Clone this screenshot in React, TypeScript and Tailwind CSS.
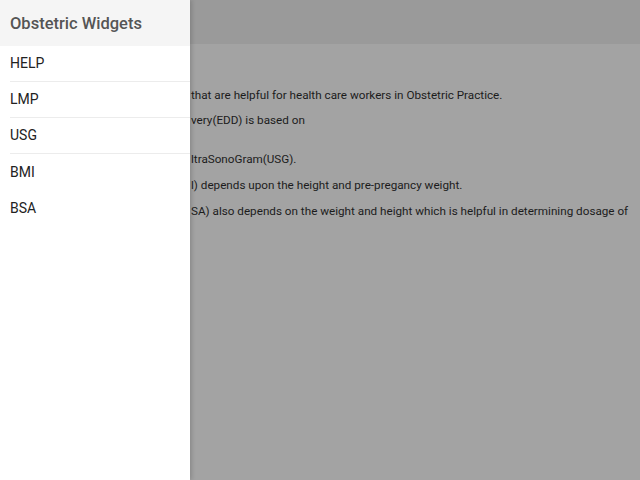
const items = ["HELP", "LMP", "USG", "BMI", "BSA"];

function Drawer() {
  return (
    <div className="z-10 h-full w-[190px] shrink-0 bg-white shadow-[2px_0_4px_rgba(0,0,0,0.15)]">
      <div className="flex h-[46px] items-center bg-[#f5f5f5] pl-[10px]">
        <span className="pt-[2px] text-[16.5px] font-medium text-[#555555]">Obstetric Widgets</span>
      </div>
      <ul className="pl-[10px]">
        {items.map((item, i) => (
          <li
            key={item}
            className={
              i < 3
                ? "flex h-[36px] items-center border-b border-[#ececec] text-[14px] text-[#222222]"
                : "flex h-[36px] items-center text-[14px] text-[#222222]"
            }
          >
            {item}
          </li>
        ))}
      </ul>
    </div>
  );
}

export default function App() {
  return (
    <div className="flex h-[480px] w-[640px] overflow-hidden bg-[#a3a3a3] font-['Roboto',sans-serif]">
      <Drawer />
      <div className="min-w-0 flex-1">
        <div className="h-[44px] bg-[#9a9a9a]" />
        <div className="whitespace-nowrap pl-[1px] pt-[43px] text-[11.7px] leading-[16px] text-[#1c1c1c]">
          <p>that are helpful for health care workers in Obstetric Practice.</p>
          <p className="mt-[9px]">very(EDD) is based on</p>
          <p className="mt-[23px]">ltraSonoGram(USG).</p>
          <p className="mt-[10px]">l) depends upon the height and pre-pregancy weight.</p>
          <p className="mt-[10px]">SA) also depends on the weight and height which is helpful in determining dosage of</p>
        </div>
      </div>
    </div>
  );
}
